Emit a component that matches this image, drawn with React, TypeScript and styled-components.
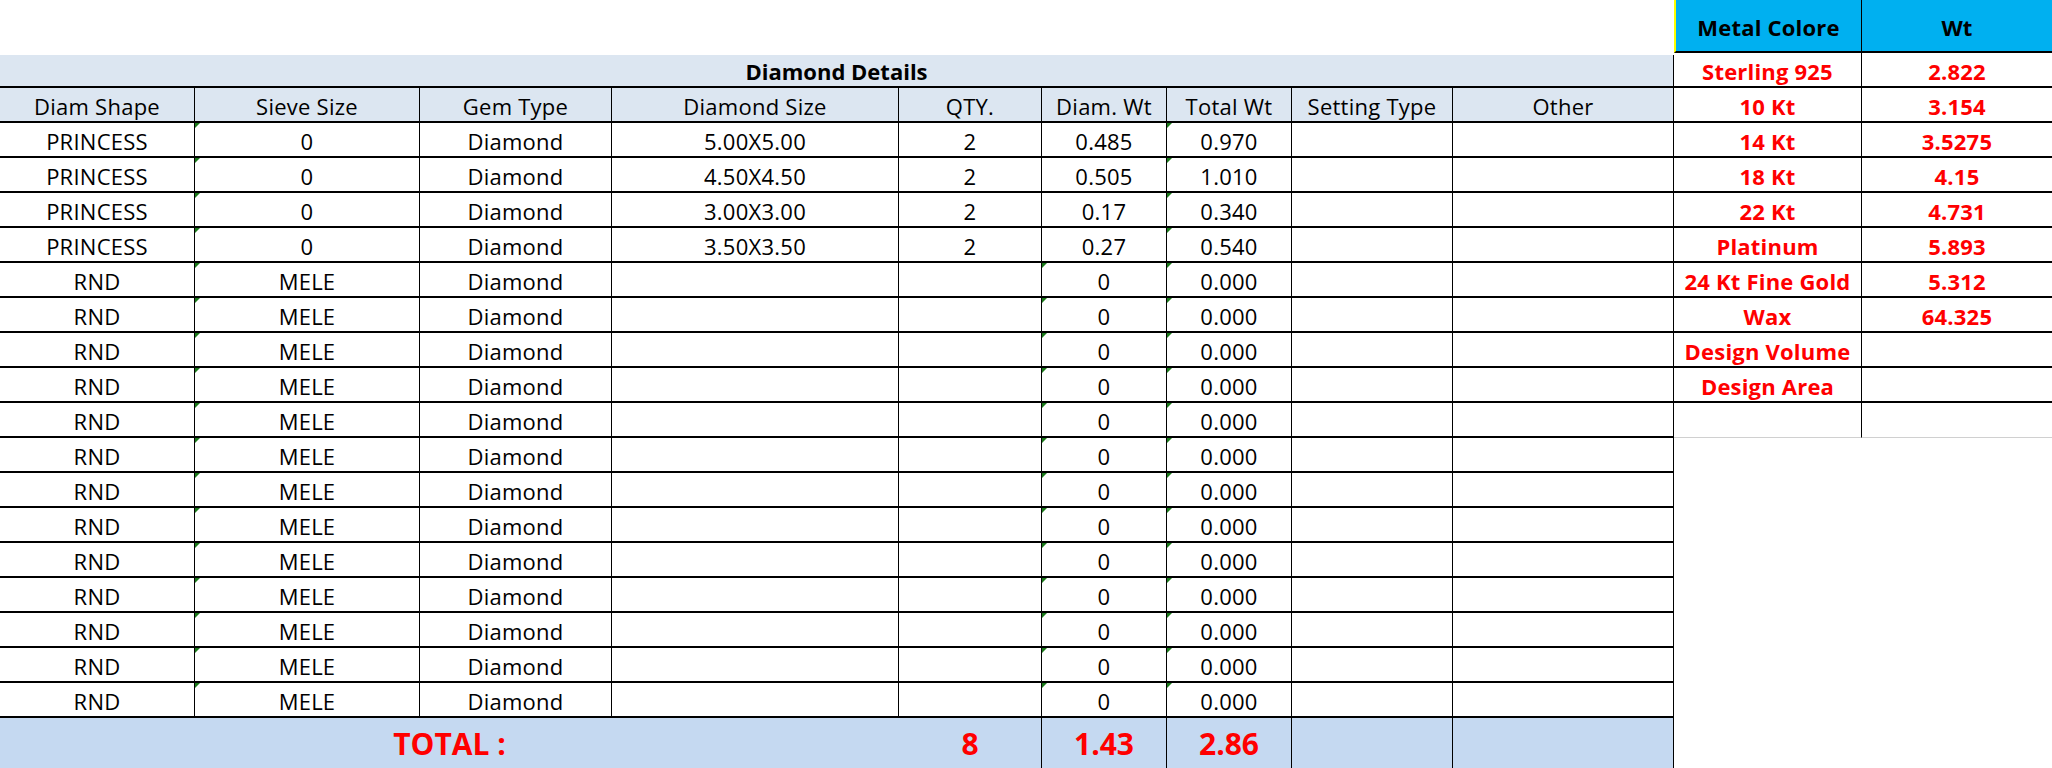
import React from "react";
import styled, { createGlobalStyle } from "styled-components";

interface DiamondRow {
    shape: string;
    sieve: string;
    gem: string;
    size: string;
    qty: string;
    diamWt: string;
    totalWt: string;
}

interface MetalRow {
    metal: string;
    wt: string;
}

const GlobalStyle = createGlobalStyle`
    body {
        margin: 0;
        background: #ffffff;
        font-family: "Open Sans", "Liberation Sans", sans-serif;
        color: #000000;
    }
`;

const COLUMNS = "195px 225px 192px 287px 143px 125px 125px 161px 221px";

const diamondRows: DiamondRow[] = [
    { shape: "PRINCESS", sieve: "0", gem: "Diamond", size: "5.00X5.00", qty: "2", diamWt: "0.485", totalWt: "0.970" },
    { shape: "PRINCESS", sieve: "0", gem: "Diamond", size: "4.50X4.50", qty: "2", diamWt: "0.505", totalWt: "1.010" },
    { shape: "PRINCESS", sieve: "0", gem: "Diamond", size: "3.00X3.00", qty: "2", diamWt: "0.17", totalWt: "0.340" },
    { shape: "PRINCESS", sieve: "0", gem: "Diamond", size: "3.50X3.50", qty: "2", diamWt: "0.27", totalWt: "0.540" },
    ...Array.from({ length: 13 }, () => ({
        shape: "RND",
        sieve: "MELE",
        gem: "Diamond",
        size: "",
        qty: "",
        diamWt: "0",
        totalWt: "0.000",
    })),
];

const metalRows: MetalRow[] = [
    { metal: "Sterling 925", wt: "2.822" },
    { metal: "10 Kt", wt: "3.154" },
    { metal: "14 Kt", wt: "3.5275" },
    { metal: "18 Kt", wt: "4.15" },
    { metal: "22 Kt", wt: "4.731" },
    { metal: "Platinum", wt: "5.893" },
    { metal: "24 Kt Fine Gold", wt: "5.312" },
    { metal: "Wax", wt: "64.325" },
    { metal: "Design Volume", wt: "" },
    { metal: "Design Area", wt: "" },
    { metal: "", wt: "" },
];

const headings = [
    "Diam Shape",
    "Sieve Size",
    "Gem Type",
    "Diamond Size",
    "QTY.",
    "Diam. Wt",
    "Total Wt",
    "Setting Type",
    "Other",
];

const Page = styled.div`
    display: flex;
    align-items: flex-start;
    width: 2052px;
`;

const DiamondSheet = styled.div`
    display: flex;
    flex-direction: column;
    width: 1674px;
    padding-top: 55px;
`;

const TitleBand = styled.div`
    height: 31px;
    box-sizing: border-box;
    display: flex;
    align-items: center;
    justify-content: center;
    background: #dce6f1;
    border-right: 1px solid #000;
    font-size: 22px;
    font-weight: 700;
`;

const Grid = styled.div`
    display: grid;
    grid-template-columns: ${COLUMNS};
`;

const Cell = styled.div<{ $head?: boolean; $flag?: boolean }>`
    position: relative;
    box-sizing: border-box;
    height: ${(p) => (p.$head ? "37px" : "35px")};
    display: flex;
    align-items: center;
    justify-content: center;
    padding-top: 2px;
    border-right: 1px solid #000;
    border-bottom: 2px solid #000;
    border-top: ${(p) => (p.$head ? "2px solid #000" : "none")};
    background: ${(p) => (p.$head ? "#dce6f1" : "#ffffff")};
    font-size: 22px;
    letter-spacing: 0.25px;
    white-space: nowrap;

    &::before {
        content: "";
        display: ${(p) => (p.$flag ? "block" : "none")};
        position: absolute;
        top: 0;
        left: 0;
        border-top: 5px solid #1b7a1b;
        border-right: 5px solid transparent;
    }
`;

const TotalCell = styled.div<{ $span?: number }>`
    grid-column: span ${(p) => p.$span ?? 1};
    box-sizing: border-box;
    height: 50px;
    display: flex;
    align-items: center;
    justify-content: center;
    border-right: ${(p) => (p.$span ? "none" : "1px solid #000")};
    background: #c5d9f1;
    color: #ff0000;
    font-size: 30px;
    font-weight: 700;

    &:last-child {
        border-right: 1px solid #000;
    }
`;

const MetalTable = styled.div`
    display: grid;
    grid-template-columns: 188px 190px;
    width: 378px;
`;

const MetalHead = styled.div<{ $first?: boolean }>`
    box-sizing: border-box;
    height: 53px;
    display: flex;
    align-items: center;
    justify-content: center;
    padding-top: 3px;
    background: #00b0f0;
    border-left: ${(p) => (p.$first ? "2px solid #ffff00" : "none")};
    border-right: ${(p) => (p.$first ? "1px solid #000" : "none")};
    border-bottom: 2px solid #000;
    font-size: 22px;
    font-weight: 700;
    letter-spacing: 0.2px;
`;

const MetalCell = styled.div<{ $label?: boolean; $last?: boolean }>`
    box-sizing: border-box;
    height: 35px;
    display: flex;
    align-items: center;
    justify-content: center;
    padding-top: 3px;
    border-right: ${(p) => (p.$label ? "1px solid #000" : "none")};
    border-bottom: ${(p) => (p.$last ? "1px solid #d0d0d0" : "2px solid #000")};
    color: #ff0000;
    font-size: 22px;
    font-weight: 700;
    letter-spacing: 0.2px;
    white-space: nowrap;
`;

const App = () => {
    return (
        <>
            <GlobalStyle />
            <Page>
                <DiamondSheet>
                    <TitleBand>Diamond Details</TitleBand>
                    <Grid>
                        {headings.map((h) => (
                            <Cell key={h} $head>
                                {h}
                            </Cell>
                        ))}
                        {diamondRows.map((row, rowIndex) => {
                            const isRound = row.shape === "RND";
                            return (
                                <React.Fragment key={rowIndex}>
                                    <Cell>{row.shape}</Cell>
                                    <Cell $flag>{row.sieve}</Cell>
                                    <Cell>{row.gem}</Cell>
                                    <Cell>{row.size}</Cell>
                                    <Cell>{row.qty}</Cell>
                                    <Cell $flag={isRound}>{row.diamWt}</Cell>
                                    <Cell $flag>{row.totalWt}</Cell>
                                    <Cell />
                                    <Cell />
                                </React.Fragment>
                            );
                        })}
                        <TotalCell $span={4}>TOTAL :</TotalCell>
                        <TotalCell>8</TotalCell>
                        <TotalCell>1.43</TotalCell>
                        <TotalCell>2.86</TotalCell>
                        <TotalCell />
                        <TotalCell />
                    </Grid>
                </DiamondSheet>
                <MetalTable>
                    <MetalHead $first>Metal Colore</MetalHead>
                    <MetalHead>Wt</MetalHead>
                    {metalRows.map((row, rowIndex) => {
                        const last = rowIndex === metalRows.length - 1;
                        return (
                            <React.Fragment key={rowIndex}>
                                <MetalCell $label $last={last}>
                                    {row.metal}
                                </MetalCell>
                                <MetalCell $last={last}>{row.wt}</MetalCell>
                            </React.Fragment>
                        );
                    })}
                </MetalTable>
            </Page>
        </>
    );
};

export default App;
